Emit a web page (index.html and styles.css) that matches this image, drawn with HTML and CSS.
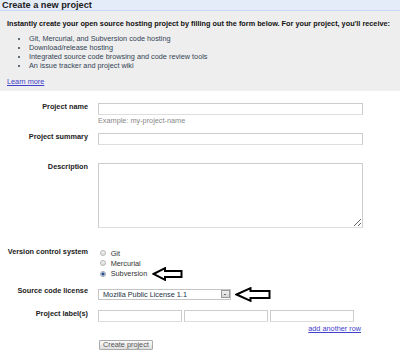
FILE: index.html
```html
<!DOCTYPE html>
<html lang="en">
  <head>
    <meta charset="UTF-8" />
    <title>Create a new project</title>
    <link rel="stylesheet" href="styles.css">
  </head>
  <body>
    <h1 class="page-title">Create a new project</h1>

    <div class="intro">
      <p class="intro-lead">
        Instantly create your open source hosting project by filling out the form below. For your project, you'll receive:
      </p>
      <ul class="intro-list">
        <li>Git, Mercurial, and Subversion code hosting</li>
        <li>Download/release hosting</li>
        <li>Integrated source code browsing and code review tools</li>
        <li>An issue tracker and project wiki</li>
      </ul>
      <a class="learn-more" href="#">Learn more</a>
    </div>

    <form class="project-form">
      <div class="form-row row-name">
        <label class="form-label" for="projectName">Project name</label>
        <div class="field">
          <input type="text" id="projectName" class="text-input" />
          <div class="hint">Example: my-project-name</div>
        </div>
      </div>

      <div class="form-row row-summary">
        <label class="form-label" for="projectSummary">Project summary</label>
        <div class="field">
          <input type="text" id="projectSummary" class="text-input" />
        </div>
      </div>

      <div class="form-row row-description">
        <label class="form-label" for="description">Description</label>
        <div class="field">
          <textarea id="description" class="text-area"></textarea>
        </div>
      </div>

      <div class="form-row row-vcs">
        <span class="form-label">Version control system</span>
        <div class="field">
          <label class="radio-option">
            <input type="radio" name="vcs" value="git" /> Git
          </label>
          <label class="radio-option">
            <input type="radio" name="vcs" value="hg" /> Mercurial
          </label>
          <label class="radio-option">
            <input type="radio" name="vcs" value="svn" checked /> Subversion
            <!-- arrow pointing at the selected option -->
            <svg class="pointer pointer-small" width="31" height="14" viewBox="0 0 31 14">
              <path d="M1.5 7 L13 1.2 L13 4 L29.5 4 L29.5 10 L13 10 L13 12.8 Z" />
            </svg>
          </label>
        </div>
      </div>

      <div class="form-row row-license">
        <label class="form-label" for="license">Source code license</label>
        <div class="field field-inline">
          <div class="select-box">
            <select id="license" class="select-input">
              <option>Mozilla Public License 1.1</option>
              <option>GNU GPL v3</option>
              <option>Apache License 2.0</option>
            </select>
            <span class="select-btn"></span>
          </div>
          <svg class="pointer" width="36" height="15" viewBox="0 0 36 15">
            <path d="M1.5 7.5 L15.5 1.2 L15.5 4 L34.5 4 L34.5 11 L15.5 11 L15.5 13.8 Z" />
          </svg>
        </div>
      </div>

      <div class="form-row row-labels">
        <label class="form-label" for="label1">Project label(s)</label>
        <div class="field">
          <div class="label-inputs">
            <input type="text" id="label1" class="text-input" />
            <input type="text" class="text-input" />
            <input type="text" class="text-input" />
          </div>
          <div class="add-row"><a href="#">add another row</a></div>
        </div>
      </div>

      <div class="form-actions">
        <button type="submit" class="submit-btn">Create project</button>
      </div>
    </form>
  </body>
</html>
```

FILE: styles.css
```css
body {
  margin: 0;
  font-family: "Liberation Sans", Arial, sans-serif;
  font-size: 7.3px;
  line-height: 9px;
  color: #222;
  background: #fff;
}
a {
  color: #4040cc;
}
.page-title {
  margin: 0;
  padding-left: 2px;
  font-size: 9.2px;
  line-height: 10px;
  background: #e5ecf9;
  border-bottom: 1px solid #c3d9ff;
}
.intro {
  background: #eeeeee;
  padding: 7.5px 7px 5.5px;
}
.intro-lead {
  margin: 0 0 6px;
  font-weight: bold;
  color: #111;
}
.intro-list {
  margin: 0 0 7px;
  padding-left: 22px;
  color: #334455;
}
.project-form {
  padding-top: 12px;
}
.form-row {
  display: flex;
  align-items: flex-start;
}
.form-label {
  flex-shrink: 0;
  width: 88px;
  margin-right: 10px;
  text-align: right;
  font-weight: bold;
  line-height: 8px;
  color: #222;
}
.field {
  width: 265px;
}
.row-name {
  margin-bottom: 8px;
}
.row-summary {
  margin-bottom: 18px;
}
.row-description {
  margin-bottom: 20px;
}
.row-vcs {
  margin-bottom: 8px;
}
.row-license {
  margin-bottom: 8px;
}
.text-input {
  display: block;
  box-sizing: border-box;
  width: 100%;
  height: 12px;
  margin: 0;
  padding: 0 2px;
  font-size: 7.3px;
  border: 1px solid #cccccc;
  border-bottom-color: #dddddd;
  background: #fff;
}
.hint {
  margin-top: 1px;
  color: #888;
}
.text-area {
  display: block;
  box-sizing: border-box;
  width: 100%;
  height: 65px;
  margin: 0;
  border: 1px solid #cccccc;
  border-bottom-color: #dddddd;
  font-size: 7.3px;
}
.radio-option {
  display: flex;
  align-items: center;
  height: 10.3px;
  color: #333;
}
.radio-option input {
  appearance: none;
  -webkit-appearance: none;
  box-sizing: border-box;
  width: 6px;
  height: 6px;
  margin: 0 4.7px 0 2px;
  border: 1px solid #b5b5b5;
  border-radius: 50%;
  background: linear-gradient(#f4f4f4, #dcdcdc);
}
.radio-option input:checked {
  background: radial-gradient(circle, #2a4d8f 0 1.3px, #e8ecf4 1.8px);
  border-color: #9aa4b4;
}
.pointer {
  flex-shrink: 0;
  margin-left: 4px;
}
.pointer path {
  fill: #fff;
  stroke: #000;
  stroke-width: 2;
  stroke-linejoin: miter;
}
.pointer-small {
  margin-left: 5px;
}
.field-inline {
  display: flex;
  align-items: center;
}
.select-box {
  display: flex;
  align-items: center;
  box-sizing: border-box;
  width: 133px;
  height: 11px;
  border: 1px solid #c4c4c4;
  background: #fff;
}
.select-input {
  appearance: none;
  -webkit-appearance: none;
  flex: 1;
  min-width: 0;
  height: 9px;
  margin: 0;
  padding: 0 0 0 4px;
  border: 0;
  background: transparent;
  font-family: inherit;
  font-size: 7.3px;
  line-height: 9px;
  color: #223344;
}
.select-btn {
  position: relative;
  box-sizing: border-box;
  width: 9px;
  height: 8px;
  margin-right: 0.5px;
  border: 1px solid #9a9a9a;
  background: linear-gradient(#f0f0f0, #d4d4d4);
}
.select-btn::after {
  content: "";
  position: absolute;
  left: 2px;
  top: 2.5px;
  border-left: 1.5px solid transparent;
  border-right: 1.5px solid transparent;
  border-top: 1.5px solid #000;
}
.label-inputs {
  display: flex;
  gap: 2px;
  width: 256px;
}
.label-inputs .text-input {
  flex: 1;
  min-width: 0;
}
.add-row {
  margin-top: 1.8px;
  padding-right: 2px;
  text-align: right;
}
.form-actions {
  margin-top: 7.2px;
  padding-left: 99px;
}
.submit-btn {
  height: 10px;
  margin: 0;
  padding: 0 3px;
  font-family: inherit;
  font-size: 7.3px;
  line-height: 8px;
  color: #555;
  border: 1px solid #aaaaaa;
  border-radius: 1px;
  background: linear-gradient(#fafafa, #dddddd);
}
```
